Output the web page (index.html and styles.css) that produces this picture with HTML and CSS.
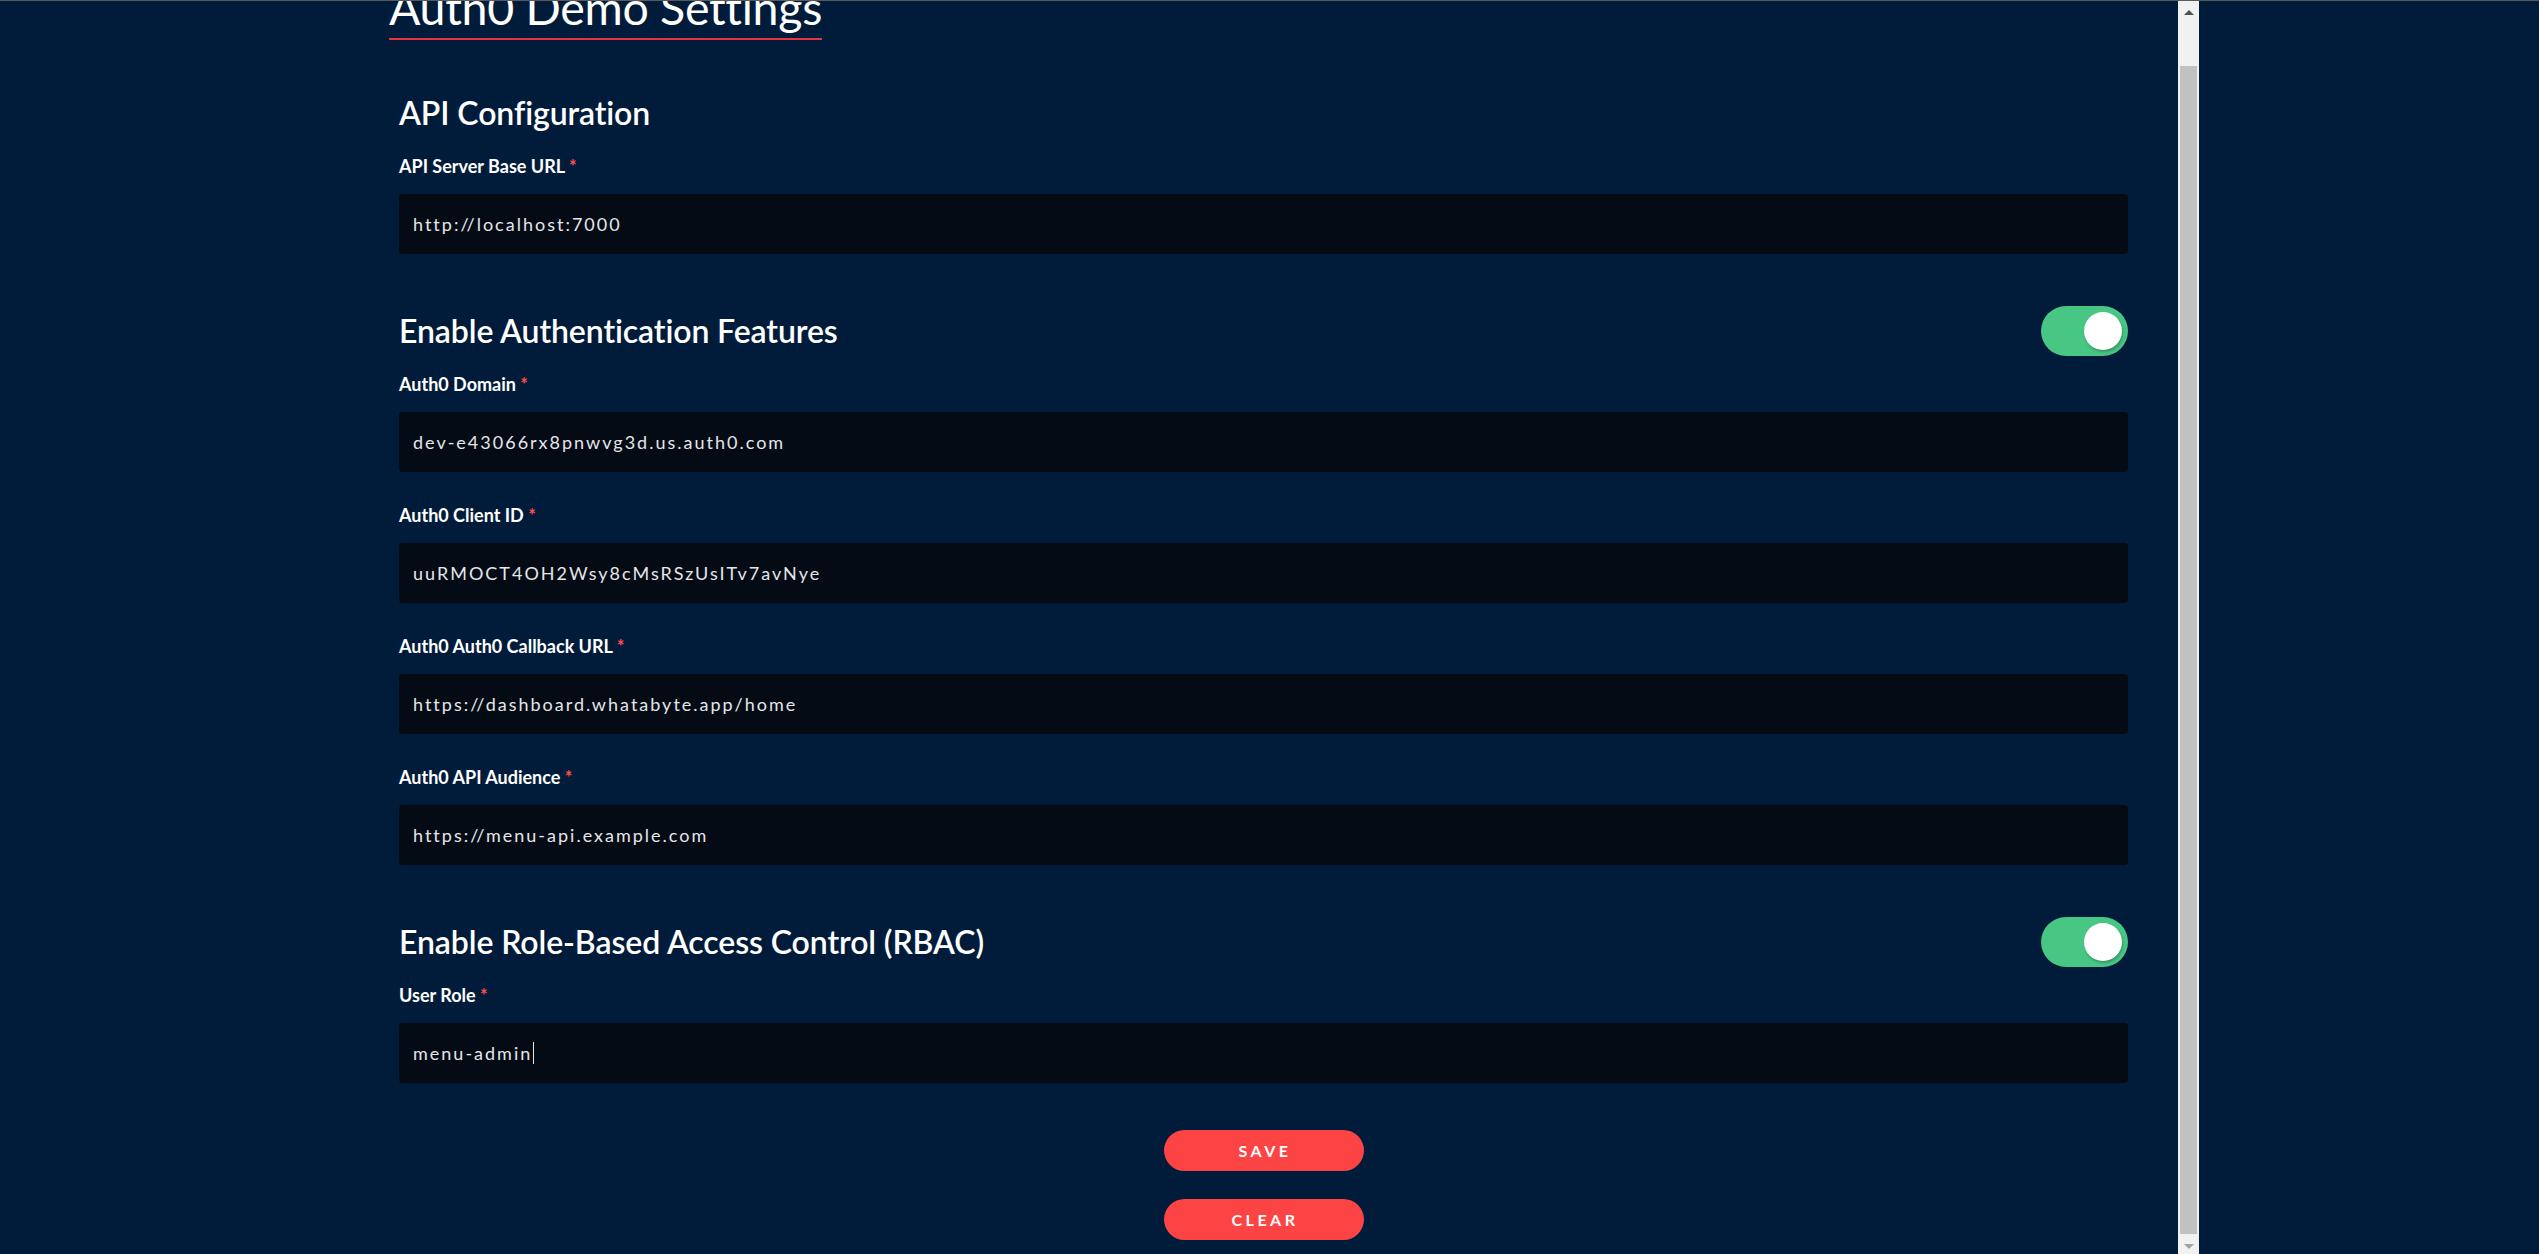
FILE: index.html
```html
<!DOCTYPE html>
<html lang="en">
<head>
<meta charset="utf-8">
<title>Auth0 Demo Settings</title>
<link rel="stylesheet" href="styles.css">
</head>
<body>
<div class="topline"></div>
<div class="frame">
  <div class="viewport">
    <main class="content">
      <h1 class="title">Auth0 Demo Settings</h1>

      <section class="section">
        <div class="section-head">
          <h2 class="section-title">API Configuration</h2>
        </div>
        <div class="field">
          <label class="field-label">API Server Base URL <span class="req">*</span></label>
          <div class="field-input">http://localhost:7000</div>
        </div>
      </section>

      <section class="section">
        <div class="section-head">
          <h2 class="section-title">Enable Authentication Features</h2>
          <div class="toggle"><span class="knob"></span></div>
        </div>
        <div class="field">
          <label class="field-label">Auth0 Domain <span class="req">*</span></label>
          <div class="field-input">dev-e43066rx8pnwvg3d.us.auth0.com</div>
        </div>
        <div class="field">
          <label class="field-label">Auth0 Client ID <span class="req">*</span></label>
          <div class="field-input">uuRMOCT4OH2Wsy8cMsRSzUsITv7avNye</div>
        </div>
        <div class="field">
          <label class="field-label">Auth0 Auth0 Callback URL <span class="req">*</span></label>
          <div class="field-input">https://dashboard.whatabyte.app/home</div>
        </div>
        <div class="field">
          <label class="field-label">Auth0 API Audience <span class="req">*</span></label>
          <div class="field-input">https://menu-api.example.com</div>
        </div>
      </section>

      <section class="section">
        <div class="section-head">
          <h2 class="section-title">Enable Role-Based Access Control (RBAC)</h2>
          <div class="toggle"><span class="knob"></span></div>
        </div>
        <div class="field">
          <label class="field-label">User Role <span class="req">*</span></label>
          <div class="field-input">menu-admin<span class="caret"></span></div>
        </div>
      </section>

      <div class="actions">
        <button class="btn">SAVE</button>
        <button class="btn">CLEAR</button>
      </div>
    </main>
  </div>
  <div class="scrollbar">
    <div class="sb-btn"><span class="arrow-up"></span></div>
    <div class="sb-thumb"></div>
    <div class="sb-btn sb-btn-bottom"><span class="arrow-down"></span></div>
  </div>
</div>
</body>
</html>
```

FILE: styles.css
```css
* { box-sizing: border-box; }

html, body {
  margin: 0;
  padding: 0;
  height: 100%;
  overflow: hidden;
  background: #011c3a;
}

body {
  font-family: Lato, "Open Sans", "Liberation Sans", sans-serif;
  color: #ffffff;
}

.topline {
  height: 1px;
  background: #5a5a5a;
}

.frame {
  display: flex;
  height: 1253px;
}

.viewport {
  width: 2178px;
  height: 1253px;
  overflow: hidden;
}

.content {
  width: 2128px;
  padding-left: 399px;
  display: flex;
  flex-direction: column;
}

.title {
  align-self: flex-start;
  margin: -16px 0 48px -10px;
  padding: 0 0 9px 0;
  font-size: 46.5px;
  line-height: 44px;
  font-weight: 400;
  border-bottom: 2px solid #e8333d;
  letter-spacing: -0.3px;
}

.section {
  display: flex;
  flex-direction: column;
}

.section + .section {
  margin-top: 19px;
}

.section-head {
  display: flex;
  align-items: center;
  justify-content: space-between;
  height: 50px;
  margin-bottom: 18px;
}

.section-title {
  margin: 0;
  font-size: 32px;
  line-height: 30px;
  font-weight: 600;
  letter-spacing: -0.1px;
}

.toggle {
  width: 87px;
  height: 50px;
  border-radius: 25px;
  background: #48c784;
  display: flex;
  align-items: center;
  justify-content: flex-end;
  padding-right: 6px;
}

.knob {
  width: 38px;
  height: 38px;
  border-radius: 50%;
  background: #ffffff;
  box-shadow: 1px 2px 3px rgba(0, 0, 0, 0.25);
}

.field {
  display: flex;
  flex-direction: column;
  margin-bottom: 33px;
}

.field-label {
  font-size: 18px;
  line-height: 21px;
  font-weight: 700;
  margin-bottom: 17px;
  letter-spacing: 0;
}

.req {
  color: #ff4b4b;
}

.field-input {
  height: 60px;
  background: #040b14;
  border-radius: 4px;
  padding: 0 14px;
  display: flex;
  align-items: center;
  font-size: 18px;
  color: #e4e6ea;
  letter-spacing: 2px;
}

.caret {
  display: inline-block;
  width: 1px;
  height: 22px;
  background: #e4e6ea;
  margin-left: 1px;
}

.actions {
  display: flex;
  flex-direction: column;
  align-items: center;
  gap: 28px;
  margin-top: 14px;
}

.btn {
  width: 200px;
  height: 41px;
  border: none;
  border-radius: 21px;
  background: #fd4445;
  color: #ffffff;
  font-family: Lato, "Open Sans", "Liberation Sans", sans-serif;
  font-size: 16px;
  font-weight: 700;
  letter-spacing: 3.5px;
  padding: 0 0 0 3px;
}

.scrollbar {
  width: 21px;
  height: 1253px;
  background: #f1f1f1;
  display: flex;
  flex-direction: column;
  align-items: center;
}

.sb-btn {
  height: 17px;
  width: 100%;
  display: flex;
  align-items: center;
  justify-content: center;
}

.sb-btn-bottom {
  margin-top: 3px;
}

.arrow-up {
  width: 0;
  height: 0;
  border-left: 5px solid transparent;
  border-right: 5px solid transparent;
  border-bottom: 5px solid #505050;
  margin-top: 5px;
}

.arrow-down {
  width: 0;
  height: 0;
  border-left: 5px solid transparent;
  border-right: 5px solid transparent;
  border-top: 5px solid #a3a3a3;
  margin-top: 2px;
}

.sb-thumb {
  width: 17px;
  height: 1168px;
  margin-top: auto;
  background: #c1c1c1;
}
```
